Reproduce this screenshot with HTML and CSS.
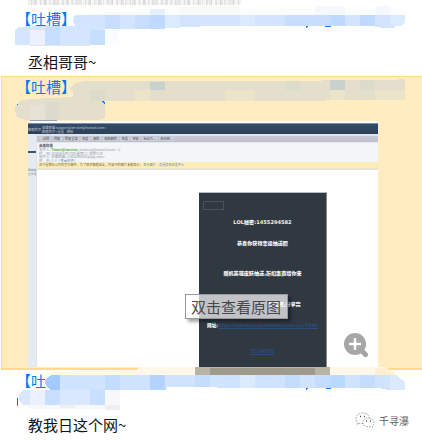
FILE: index.html
```html
<!DOCTYPE html>
<html lang="zh-CN">
<head>
<meta charset="utf-8">
<title>吐槽</title>
<link rel="stylesheet" href="styles.css">
</head>
<body>
<main class="chat">
  <div class="clipped"></div>
  <section class="message">
    <header class="sender">【吐槽】</header>
    <p class="text">丞相哥哥~</p>
    <svg class="mosaic first" width="422" height="50" viewBox="0 0 422 50" shape-rendering="crispEdges">
      <path fill="#fbfcfe" d="M135 9h270v6H75l60-3zM105 30h14v14h-14z"/>
      <path fill="#f5f9ff" d="M315 6h30v9h-30zM375 6h15v9h-15z"/>
      <path fill="#f9f9f9" d="M105 12h45v3H90zM210 6h30v9h-60v-8z"/>
      <path fill="#e5f0ff" d="M150 9h15v6h-15z"/>
      <path fill="#d3e4ff" d="M75 15h330v8l-4 3h-6v2h-11l-9-1v-1H210l-20 1-40 2H90l-14-2-3-6z"/>
      <path fill="#c8deff" d="M105 15h15v14h-15zM135 15h15v14h-15zM285 15h45v11h-45z"/>
      <path fill="#bfdaff" d="M150 15h15v14h-15zM330 15h15v11h-15zM360 15h15v11h-15z"/>
      <path fill="#dceaff" d="M165 15h15v13h-15zM240 15h15v11h-15zM390 15h15v8l-4 3h-11z"/>
      <path fill="#d3e5ff" d="M15 30l4-3 11-1h75v19H15z"/>
      <path fill="#ebf1ff" d="M30 30h15v15H30z"/>
      <path fill="#c6dfff" d="M45 26h15v19H45zM90 30h15v15H90z"/>
      <path fill="#e3e5e9" d="M30 45h60v1H30z"/>
      <path fill="#0a78ff" d="M306 26h2v1h-1v1h-1zM325 26h6v1h-6z"/>
    </svg>
  </section>

  <section class="message selected">
    <header class="sender">【吐槽】</header>
    <svg class="mosaic second" width="421" height="46" viewBox="1 77 421 46" shape-rendering="crispEdges">
      <path fill="#e4dfcc" d="M70 88l5-5 10-2h237v-1h76v-1h7v20l-3 1h-76v1H105v17l-5 2H25l-8-3-2-6v-5l5-5 10-2 43-2v-5l-3-3z"/>
      <path fill="#ece4c8" d="M225 90h30v11h-30zM135 90h15v11h-15zM330 90h15v10h-15zM375 90h30v9l-3 1h-27z"/>
      <path fill="#dcdccc" d="M90 90h15v11H90zM150 81h15v9h-15zM285 81h15v9h-15zM360 80h15v10h-15zM45 102h15v18H45z"/>
      <path fill="#c9d1cd" d="M150 82h15v8h-15zM330 80h15v10h-15z"/>
      <path fill="#e6e3d6" d="M30 105h15v15H30z"/>
      <path fill="#99a2ad" d="M30 120h27v1H30z"/>
      <path fill="#0a78ff" d="M17 104h1v1h-1zM102 101h2v1h1v2h-1v-1h-1v-1h-1z"/>
    </svg>
    <figure class="shot">
      <div class="titlebar"><span class="brand">邮箱首页</span><div class="account">英雄联盟 support@service@foxmail.com&gt;<br>邮箱首页 | 设置 - 换肤</div></div>
      <div class="mailbody">
        <aside class="rail"><i class="rail-mark"></i><span>草稿箱<br>已发送</span></aside>
        <div class="mail">
          <div class="tools"><b>«返回</b><b>回复</b><b>回复全部</b><b>转发</b><b>删除</b><b>彻底删除</b><b>举报</b><b>拒收</b><b>标记为...</b><b>移动到...</b></div>
          <div class="info"><strong>英雄联盟</strong>发件人: <em>Token@service</em> &lt;tokens@foxmail.com&gt; ☆<br>时　间: 2016年5月17日(星期二) 凌晨3:28<br>收件人: 英雄联盟 &lt;1455294582@qq.com&gt;<br>附　件: 1 个 ( <a>查看附件</a>)</div>
          <div class="notice">这不是腾讯公司的官方邮件。为了保护邮箱安全，内容中的图片未被显示。 <a>显示图片　总是信任此发件人</a></div>
          <div class="canvas">
            <article class="promo">
              <i class="missing"></i>
              <p class="p1">LOL秘密:1455294582</p>
              <p class="p2">恭喜你获得幸运抽送照</p>
              <p class="p3">随机英雄皮肤抽送,折扣惠商增你来</p>
              <p class="p4">奖品吧,分享完</p>
              <p class="p5">网址:<a>http://tokservice.tokenti.com.cn/7848</a></p>
              <p class="p6"><a>51284582</a></p>
            </article>
          </div>
        </div>
      </div>
    </figure>
    <div class="tooltip">双击查看原图</div>
    <svg class="zoom" width="26" height="27" viewBox="0 0 26 27"><path d="M18 18l4.500 4.500" stroke="#a3a3a3" stroke-width="5" stroke-linecap="round"/><circle cx="12" cy="12" r="11" fill="#a6a6a6"/><path d="M12 6v12M6 12h12" stroke="#fff" stroke-width="2.500"/></svg>
  </section>

  <section class="message last">
    <header class="sender">【吐槽】</header>
    <p class="text">教我日这个网~</p>
    <svg class="mosaic third" width="422" height="46" viewBox="0 366 422 46" shape-rendering="crispEdges">
      <path fill="#fff" d="M44 382l3-8 5-4h353v18H120v24H18l-2-14 5-8 7-2h19z"/>
      <path fill="#fff7e7" d="M140 367h245l8 5v3H48l4-3 84-2z"/>
      <path fill="#ffefd0" d="M375 368h12l9 7h-21z"/>
      <path fill="#b8b4a5" d="M195 367h135v8H195z"/>
      <path fill="#9e9b8d" d="M210 368h105v7H210z"/>
      <path fill="#d1e4ff" d="M45 381l3-4 4-2h344l9 7v8h-15l-9-1v-1H217v-1h-50v3H50l-4-4z"/>
      <path fill="#a3cbff" d="M45 381l3-4 4-2h8v15H50l-4-4z"/>
      <path fill="#b4d4ff" d="M150 375h15v15h-15z"/>
      <path fill="#c3dcff" d="M105 375h15v15h-15zM195 375h15v12h-15zM285 375h15v13h-15zM315 375h15v13h-15zM360 375h15v13h-15z"/>
      <path fill="#b9d9ff" d="M330 375h15v13h-15z"/>
      <path fill="#dbeaff" d="M240 375h15v13h-15zM390 375h6l9 7v8h-15z"/>
      <path fill="#d9e7ff" d="M19 394l4-4h82v15H24l-5-4z"/>
      <path fill="#ebf1ff" d="M30 390h15v15H30z"/>
      <path fill="#c9dfff" d="M90 390h15v15H90zM45 390h15v15H45z"/>
      <path fill="#f8f8fa" d="M25 405h80v4H30zM105 390h15v15h-15z"/>
      <path fill="#eeeff1" d="M60 405h15v3H60zM105 405h15v5h-15z"/>
      <path fill="#0a78ff" d="M17 398h1v8h-1zM306 388h2v1h-1v1h-1zM326 388h5v1h-5z"/>
    </svg>
    <footer class="watermark">
      <svg width="20" height="17" viewBox="0 0 20 17" fill="none" stroke="#999" stroke-width=".8"><path stroke-dasharray="2 1" d="M8 11.500c-2 .2-3 0-4 0l-2 1 .3-2C-1 6 2 1 7.500 1S14 4 14 6"/><path fill="#fff" stroke-dasharray="2 1" d="M13.500 6c3 0 5.500 2 5.500 4.500 0 1.500-.6 2.500-1.600 3.300l.2 1.700-2-.9c-4 1-7.600-1-7.600-4.100C8 8 10.500 6 13.500 6z"/><path stroke="#555" stroke-width="1.300" d="M5 4.500h1M9 4.500h1M11 9h1M15 9h1"/></svg>
      <span>千寻瀑</span>
    </footer>
  </section>
</main>
</body>
</html>
```
FILE: styles.css
```css
* { box-sizing: border-box; }
body { margin: 0; background: #fff; font-family: "Noto Sans CJK SC", sans-serif; }
p, figure { margin: 0; }
.chat { width: 422px; height: 440px; overflow: hidden; }

.clipped {
  height: 5px;
  width: 213px;
  margin-left: 28px;
  background:
    repeating-linear-gradient(90deg, transparent 0 3px, rgba(170,170,170,.28) 3px 4px, transparent 4px 7px, rgba(170,170,170,.22) 7px 9px),
    repeating-linear-gradient(90deg, #f2f2f2 0 5px, #e8e8e8 5px 8px, #f8f8f8 8px 11px);
}

.message { position: relative; height: 71px; }
.sender {
  height: 30px;
  padding: 0 0 0 16px;
  font-size: 15px;
  line-height: 28px;
  color: #0078ff;
}
.text { padding: 12px 0 0 28px; font-size: 15px; line-height: 30px; color: #111; }
.mosaic { position: absolute; left: 0; display: block; }
.first { top: -5px; }
.second { top: 0; }
.third { top: -4px; }

.selected {
  height: 294px;
  margin-left: 1px;
  background: #ffecc1;
  border: solid #ffdc8a;
  border-width: 1px 0 2px 1px;
}
.selected .sender { height: 44px; padding-left: 14px; line-height: 20px; }
.selected .second { left: -1px; }

.shot {
  width: 350px;
  height: 246px;
  margin-left: 26px;
  border-top: 2px solid #f8f9fb;
  background: #fff;
  overflow: hidden;
}
.titlebar {
  display: flex;
  height: 11px;
  border-top: 1px solid #7e8fa3;
  background: linear-gradient(#334c68, #2d4059);
  color: #c3ccd6;
  font-size: 3.300px;
  line-height: 3.500px;
}
.brand { width: 14px; padding-top: 4px; white-space: nowrap; overflow: hidden; }
.account { padding-top: 2px; }
.mailbody { display: flex; height: 233px; }
.rail { width: 9px; background: #e6eaf1; border-right: 1px solid #dfe3ec; color: #858c97; font-size: 2.800px; line-height: 4px; white-space: nowrap; }
.rail span { display: block; margin-top: 15px; }
.rail-mark { display: block; height: 2px; margin-top: 17px; background: #3d5270; }
.mail { flex: 1; display: flex; flex-direction: column; }
.tools {
  display: flex;
  gap: 2px;
  height: 9px;
  padding: 1px 3px;
  border-top: 2px solid #dfe3eb;
  border-bottom: 1px solid #e5e7ed;
  background: linear-gradient(#c6c9d5, #bdc0ce);
  font-size: 3.200px;
  line-height: 4px;
  color: #5c5e66;
}
.tools b { padding: 0 1.300px; background: #d0d2da; font-weight: 500; }
.info { height: 20px; padding: 1px 2px 0; background: #f3f5f8; font-size: 3.500px; line-height: 3.600px; color: #929aa4; }
.info strong { display: block; color: #555; font-size: 3.500px; line-height: 4px; }
.info em { color: #65ad45; font-style: normal; font-weight: bold; }
a { color: #6b8cb8; }
.notice { height: 8px; padding-left: 2px; border-bottom: 2px solid #eae5d2; background: #ffedb8; font-size: 3.150px; line-height: 6px; color: #756b51; white-space: nowrap; }
.canvas { padding: 22px 0 0 162px; }
.promo {
  width: 128px;
  height: 176px;
  border-top: 1px solid #b9bdc2;
  border-right: 1px solid #868b92;
  background: #303842;
  color: #f2f2f2;
  text-align: center;
  font-size: 5.100px;
  line-height: 8px;
  font-weight: 900;
  white-space: nowrap;
}
.promo p { height: 8px; }
.missing { display: block; width: 21px; height: 9px; margin: 8px 0 8px 4px; border: 1px solid #4a525b; }
.promo .p1 { font-family: "DejaVu Sans", "Noto Sans CJK SC", sans-serif; }
.promo .p2 { margin-top: 13px; }
.promo .p3 { margin-top: 22px; }
.promo .p4 { margin-top: 23px; padding-left: 44px; }
.promo .p5 { margin-top: 14px; font-family: "DejaVu Sans", "Noto Sans CJK SC", sans-serif; font-size: 4.700px; }
.promo .p6 { margin-top: 17px; }
.promo a { color: #294e7c; font-weight: 600; text-decoration: underline; text-decoration-thickness: .5px; }

.tooltip {
  position: absolute;
  left: 183px;
  top: 217px;
  width: 103px;
  height: 25px;
  padding-left: 5px;
  border: 1px solid #999;
  background: rgba(255,255,255,.7);
  box-shadow: 3px 3px 3px rgba(0,0,0,.35);
  font-size: 15px;
  line-height: 23px;
  color: #484848;
  white-space: nowrap;
}
.zoom { position: absolute; left: 341px; top: 255px; }

.last { height: 70px; }
.last .sender { line-height: 22px; height: 43px; }
.last .text { padding-top: 0; line-height: 24px; }
.watermark {
  position: absolute;
  left: 355px;
  top: 42px;
  display: flex;
  gap: 4px;
  align-items: center;
  font-size: 10px;
  line-height: 17px;
  color: #606060;
}
```
